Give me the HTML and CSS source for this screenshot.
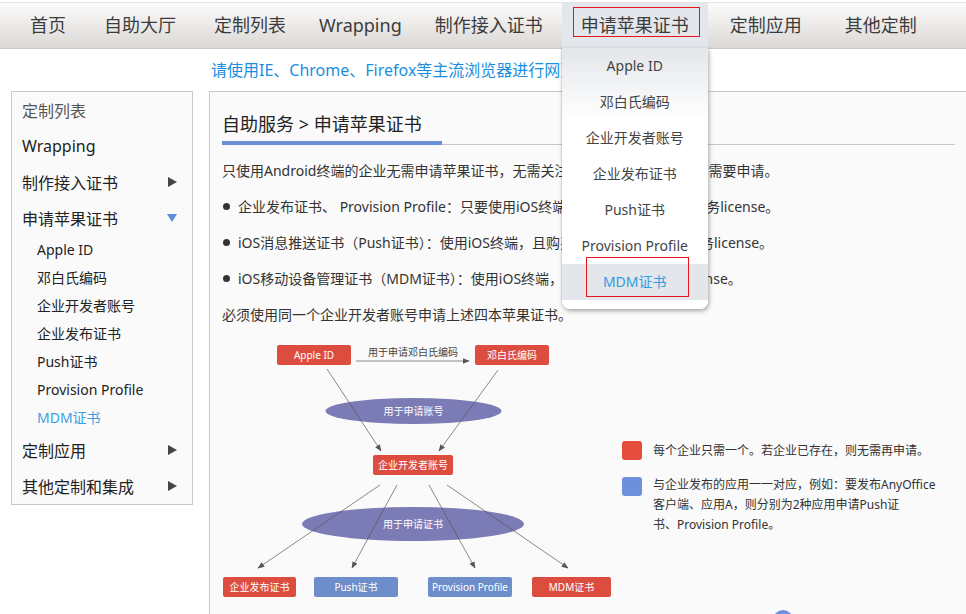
FILE: index.html
```html
<!DOCTYPE html>
<html lang="zh-CN">
<head>
<meta charset="utf-8">
<title>申请苹果证书</title>
<link rel="stylesheet" href="styles.css">
</head>
<body>
<header class="topnav">
  <ul class="nav-list">
    <li class="nav-item"><a class="nav-link">首页</a></li>
    <li class="nav-item"><a class="nav-link">自助大厅</a></li>
    <li class="nav-item"><a class="nav-link">定制列表</a></li>
    <li class="nav-item nav-item--latin"><a class="nav-link">Wrapping</a></li>
    <li class="nav-item"><a class="nav-link">制作接入证书</a></li>
    <li class="nav-item is-active">
      <a class="nav-link">申请苹果证书</a>
      <span class="mark mark--nav"></span>
      <ul class="dropdown">
        <li class="dropdown-item">Apple ID</li>
        <li class="dropdown-item">邓白氏编码</li>
        <li class="dropdown-item">企业开发者账号</li>
        <li class="dropdown-item">企业发布证书</li>
        <li class="dropdown-item">Push证书</li>
        <li class="dropdown-item">Provision Profile</li>
        <li class="dropdown-item is-current">MDM证书<span class="mark mark--menu"></span></li>
      </ul>
    </li>
    <li class="nav-item nav-item--wide"><a class="nav-link">定制应用</a></li>
    <li class="nav-item nav-item--wide"><a class="nav-link">其他定制</a></li>
  </ul>
</header>

<div class="notice">请使用IE、Chrome、Firefox等主流浏览器进行网页浏览</div>

<div class="page">
  <aside class="sidebar">
    <div class="side-row side-row--head">定制列表</div>
    <div class="side-row">Wrapping</div>
    <div class="side-row">制作接入证书<i class="arrow arrow--right"></i></div>
    <div class="side-row">申请苹果证书<i class="arrow arrow--down"></i></div>
    <div class="side-sub">Apple ID</div>
    <div class="side-sub">邓白氏编码</div>
    <div class="side-sub">企业开发者账号</div>
    <div class="side-sub">企业发布证书</div>
    <div class="side-sub">Push证书</div>
    <div class="side-sub">Provision Profile</div>
    <div class="side-sub is-current">MDM证书</div>
    <div class="side-row">定制应用<i class="arrow arrow--right"></i></div>
    <div class="side-row">其他定制和集成<i class="arrow arrow--right"></i></div>
  </aside>

  <main class="content">
    <h2 class="content-title"><span class="content-title-text">自助服务 &gt; 申请苹果证书</span></h2>
    <div class="content-body">
      <p class="para">只使用Android终端的企业无需申请苹果证书，无需关注此内容，其他终端也不需要申请。</p>
      <p class="para"><span class="bullet"></span>企业发布证书、 Provision Profile：只要使用iOS终端，就需要申请并开通业务license。</p>
      <p class="para"><span class="bullet"></span>iOS消息推送证书（Push证书）：使用iOS终端，且购买了消息推送功能的业务license。</p>
      <p class="para"><span class="bullet"></span>iOS移动设备管理证书（MDM证书）：使用iOS终端，且使用了MDM业务license。</p>
      <p class="para">必须使用同一个企业开发者账号申请上述四本苹果证书。</p>
    </div>

    <div class="diagram-row">
      <svg class="diagram" width="390" height="290" viewBox="0 0 390 290">
        <defs>
          <marker id="ah" viewBox="0 0 10 10" refX="9" refY="5" markerUnits="userSpaceOnUse" markerWidth="7" markerHeight="7" orient="auto">
            <path d="M0,1 L10,5 L0,9 z" fill="#3a3a3a"/>
          </marker>
        </defs>
        <ellipse cx="191.5" cy="76" rx="88" ry="13" fill="#7b7bb5"/>
        <ellipse cx="191" cy="189" rx="111" ry="17" fill="#7b7bb5"/>
        <g class="dg-lines" marker-end="url(#ah)">
          <line x1="134" y1="26" x2="247" y2="26"/>
          <line x1="105" y1="34" x2="159" y2="116"/>
          <line x1="276" y1="35" x2="217" y2="116"/>
          <line x1="158" y1="150" x2="36" y2="233"/>
          <line x1="175" y1="150" x2="130" y2="233"/>
          <line x1="207" y1="150" x2="253" y2="233"/>
          <line x1="225" y1="150" x2="346" y2="233"/>
        </g>
        <rect x="55" y="10" width="74" height="20" rx="2" fill="#dd4d3f"/>
        <rect x="253" y="10" width="74" height="20" rx="2" fill="#dd4d3f"/>
        <rect x="151" y="120" width="80" height="20" rx="2" fill="#dd4d3f"/>
        <rect x="1" y="242" width="73" height="20" rx="2" fill="#dd4d3f"/>
        <rect x="92" y="242" width="84" height="20" rx="2" fill="#6d8ecb"/>
        <rect x="206" y="242" width="84" height="20" rx="2" fill="#6d8ecb"/>
        <rect x="310" y="242" width="79" height="20" rx="2" fill="#dd4d3f"/>
        <text class="dg-caption" x="191" y="20.5">用于申请邓白氏编码</text>
        <text class="dg-text" x="92" y="23.5">Apple ID</text>
        <text class="dg-text" x="290" y="23.5">邓白氏编码</text>
        <text class="dg-text" x="191.5" y="79.5">用于申请账号</text>
        <text class="dg-text" x="191" y="133.5">企业开发者账号</text>
        <text class="dg-text" x="191" y="192.5">用于申请证书</text>
        <text class="dg-text" x="37.5" y="255.5">企业发布证书</text>
        <text class="dg-text" x="134" y="255.5">Push证书</text>
        <text class="dg-text" x="248" y="255.5">Provision Profile</text>
        <text class="dg-text" x="349.5" y="255.5">MDM证书</text>
      </svg>

      <div class="legend">
        <div class="legend-item">
          <span class="swatch swatch--red"></span>
          <p class="legend-text">每个企业只需一个。若企业已存在，则无需再申请。</p>
        </div>
        <div class="legend-item legend-item--second">
          <span class="swatch swatch--blue"></span>
          <p class="legend-text">与企业发布的应用一一对应，例如：要发布AnyOffice<br>客户端、应用A，则分别为2种应用申请Push证<br>书、Provision Profile。</p>
        </div>
        <span class="dot"></span>
      </div>
    </div>
  </main>
</div>
</body>
</html>
```

FILE: styles.css
```css
* {
  box-sizing: border-box;
}

html,
body {
  margin: 0;
  padding: 0;
  overflow: hidden;
}

body {
  width: 966px;
  height: 614px;
  background: #fff;
  color: #333;
  font-family: "Noto Sans", "Noto Sans CJK SC", sans-serif;
}

/* ---------- top navigation ---------- */
.topnav {
  margin-top: 2px;
  height: 47px;
  border-top: 1px solid #e3e3e3;
  border-bottom: 1px solid #c9c9c9;
  background: linear-gradient(#fcfcfc, #dbd8d5);
}

.nav-list {
  display: flex;
  margin: 0;
  padding: 0 0 0 11px;
  list-style: none;
  height: 45px;
}

.nav-item {
  position: relative;
  padding: 0 19px;
  height: 45px;
  line-height: 45px;
  font-size: 18px;
  color: #3c3c3c;
  white-space: nowrap;
}

.nav-item--latin {
  padding: 0 14px;
}

.nav-item--wide {
  padding: 0 21px 0 22px;
}

.nav-item.is-active {
  background: #e3e6ea;
}

.nav-link {
  color: inherit;
  text-decoration: none;
}

.mark {
  position: absolute;
  border: 1px solid #e8141b;
  pointer-events: none;
}

.mark--nav {
  left: 11px;
  top: 4px;
  width: 127px;
  height: 30px;
}

.mark--menu {
  left: 24px;
  top: -7px;
  width: 103px;
  height: 40px;
}

/* ---------- dropdown ---------- */
.dropdown {
  position: absolute;
  z-index: 10;
  top: 100%;
  left: 0;
  width: 100%;
  margin: 0;
  padding: 0 0 9px;
  list-style: none;
  background: linear-gradient(#e3e6ea 0, #ffffff 72px);
  border-radius: 0 0 8px 8px;
  box-shadow: 1px 2px 4px rgba(0, 0, 0, 0.35), -1px 0 1px rgba(0, 0, 0, 0.08);
}

.dropdown-item {
  position: relative;
  height: 36px;
  line-height: 36px;
  text-align: center;
  font-size: 14px;
  color: #444;
}

.dropdown-item.is-current {
  background: #e3e6ea;
  color: #2f9be3;
}

/* ---------- notice ---------- */
.notice {
  height: 42px;
  line-height: 42px;
  padding-left: 211px;
  font-size: 16px;
  color: #1a8fe0;
  white-space: nowrap;
}

/* ---------- page layout ---------- */
.page {
  display: flex;
  align-items: flex-start;
  gap: 16px;
  width: 968px;
  padding-left: 11px;
}

.sidebar {
  flex: none;
  width: 182px;
  border: 1px solid #c8c8c8;
  background: #fafafa;
}

.side-row {
  display: flex;
  align-items: center;
  justify-content: space-between;
  height: 36px;
  padding: 0 15px 0 10px;
  font-size: 16px;
  color: #222;
  white-space: nowrap;
}

.side-row--head {
  color: #555;
}

.side-sub {
  height: 28px;
  line-height: 28px;
  padding-left: 25px;
  font-size: 14px;
  color: #222;
  white-space: nowrap;
}

.side-sub.is-current {
  color: #3a9ee6;
}

.arrow {
  display: block;
  width: 0;
  height: 0;
}

.arrow--right {
  border-left: 9px solid #444;
  border-top: 5px solid transparent;
  border-bottom: 5px solid transparent;
}

.arrow--down {
  border-top: 8px solid #5b8ddb;
  border-left: 5px solid transparent;
  border-right: 5px solid transparent;
}

/* ---------- content ---------- */
.content {
  flex: 1;
  min-width: 0;
  min-height: 560px;
  border: 1px solid #c8c8c8;
  background: #fafafa;
  padding: 17px 12px 0 12px;
}

.content-title {
  display: flex;
  margin: 0;
  font-size: 18px;
  font-weight: normal;
  line-height: 30px;
  color: #222;
  border-bottom: 1px solid #c8c8c8;
}

.content-title-text {
  min-width: 220px;
  padding-bottom: 2px;
  border-bottom: 4px solid #6d8fd9;
  margin-bottom: -1px;
  white-space: nowrap;
}

.content-body {
  padding-top: 8px;
}

.para {
  margin: 0;
  font-size: 14px;
  line-height: 36px;
  color: #333;
  white-space: nowrap;
}

.bullet {
  display: inline-block;
  width: 7px;
  height: 7px;
  margin: 0 8px 0 1px;
  border-radius: 50%;
  background: #333;
  vertical-align: 2px;
}

/* ---------- diagram ---------- */
.diagram-row {
  display: flex;
  align-items: flex-start;
  margin-top: 2px;
}

.diagram {
  flex: none;
  display: block;
}

.dg-lines line {
  stroke: #555;
  stroke-width: 0.8;
  opacity: 0.85;
}

.dg-text {
  font-size: 10px;
  fill: #fff;
  text-anchor: middle;
}

.dg-caption {
  font-size: 10px;
  fill: #444;
  text-anchor: middle;
}

.legend {
  margin-left: 10px;
  padding-top: 106px;
}

.legend-item {
  display: flex;
  align-items: flex-start;
  gap: 11px;
}

.legend-item--second {
  margin-top: 14px;
}

.legend-item--second .swatch {
  margin-top: 2px;
}

.swatch {
  flex: none;
  width: 20px;
  height: 19px;
  border-radius: 3px;
}

.swatch--red {
  background: #e54c3c;
}

.swatch--blue {
  background: #6c90dc;
}

.legend-text {
  margin: 0;
  font-size: 12px;
  line-height: 20px;
  color: #333;
  white-space: nowrap;
}

.dot {
  display: block;
  width: 20px;
  height: 20px;
  margin: 75px 0 0 151px;
  border-radius: 50%;
  background: #6c90dc;
}
```
